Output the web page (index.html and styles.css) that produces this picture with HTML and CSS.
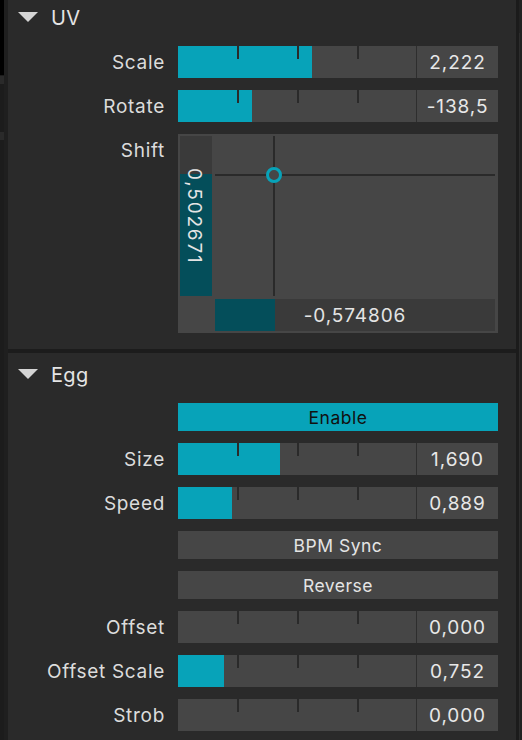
FILE: index.html
```html
<!DOCTYPE html>
<html>
<head>
<meta charset="utf-8">
<link rel="stylesheet" href="styles.css">
</head>
<body>
<div class="app">
  <div class="rail-left"><div class="rail-black"></div><div class="rail-dot"></div><div class="rail-dot second"></div></div>
  <div class="main">
    <section class="panel uv">
      <div class="panel-head"><span class="tri"></span><span class="title">UV</span></div>
      <div class="rows">
        <div class="row">
          <div class="label">Scale</div>
          <div class="slider">
            <div class="track"><div class="fill" style="width:134px"></div><span class="tick t1"></span><span class="tick t2"></span><span class="tick t3"></span></div>
            <div class="value">2,222</div>
          </div>
        </div>
        <div class="row">
          <div class="label">Rotate</div>
          <div class="slider">
            <div class="track"><div class="fill" style="width:74px"></div><span class="tick t1"></span><span class="tick t2"></span><span class="tick t3"></span></div>
            <div class="value">-138,5</div>
          </div>
        </div>
        <div class="row">
          <div class="label">Shift</div>
          <div class="xy">
            <div class="ybar" style="--fill:122px"><span class="ytext">0,502671</span></div>
            <div class="pad">
              <span class="hline" style="top:38px"></span>
              <span class="vline" style="left:58px"></span>
              <span class="dot" style="left:59px;top:39px"></span>
            </div>
            <div class="xbar" style="--fill:60px">-0,574806</div>
          </div>
        </div>
      </div>
    </section>
    <section class="panel egg">
      <div class="panel-head"><span class="tri"></span><span class="title">Egg</span></div>
      <div class="rows">
        <div class="row">
          <div class="spacer"></div>
          <div class="btn on">Enable</div>
        </div>
        <div class="row">
          <div class="label">Size</div>
          <div class="slider">
            <div class="track"><div class="fill" style="width:102px"></div><span class="tick t1"></span><span class="tick t2"></span><span class="tick t3"></span></div>
            <div class="value">1,690</div>
          </div>
        </div>
        <div class="row">
          <div class="label">Speed</div>
          <div class="slider">
            <div class="track"><div class="fill" style="width:54px"></div><span class="tick t1"></span><span class="tick t2"></span><span class="tick t3"></span></div>
            <div class="value">0,889</div>
          </div>
        </div>
        <div class="row">
          <div class="spacer"></div>
          <div class="btn">BPM Sync</div>
        </div>
        <div class="row">
          <div class="spacer"></div>
          <div class="btn">Reverse</div>
        </div>
        <div class="row">
          <div class="label">Offset</div>
          <div class="slider">
            <div class="track"><div class="fill" style="width:0px"></div><span class="tick t1"></span><span class="tick t2"></span><span class="tick t3"></span></div>
            <div class="value">0,000</div>
          </div>
        </div>
        <div class="row">
          <div class="label">Offset Scale</div>
          <div class="slider">
            <div class="track"><div class="fill" style="width:46px"></div><span class="tick t1"></span><span class="tick t2"></span><span class="tick t3"></span></div>
            <div class="value">0,752</div>
          </div>
        </div>
        <div class="row">
          <div class="label">Strob</div>
          <div class="slider">
            <div class="track"><div class="fill" style="width:0px"></div><span class="tick t1"></span><span class="tick t2"></span><span class="tick t3"></span></div>
            <div class="value">0,000</div>
          </div>
        </div>
      </div>
    </section>
  </div>
  <div class="rail-right"><div class="rr-a"></div><div class="rr-b"><div class="rr-line"></div></div></div>
</div>
</body>
</html>
```

FILE: styles.css
```css
html, body {
  margin: 0;
  padding: 0;
}
body {
  width: 522px;
  height: 740px;
  overflow: hidden;
  background: #1c1c1c;
  font-family: Inter, "Noto Sans", sans-serif;
  color: #dedede;
}
.app {
  display: flex;
  height: 740px;
}
.rail-left {
  width: 8px;
  flex: none;
  position: relative;
  background: linear-gradient(to right, #1c1c1c 4px, #1f1f1f 4px);
}
.rail-black {
  width: 4px;
  height: 75px;
  background: #000;
}
.rail-dot {
  position: absolute;
  left: 0;
  top: 76px;
  width: 4px;
  height: 8px;
  background: #2a2a2a;
}
.rail-dot.second {
  top: 132px;
}
.main {
  width: 508px;
  flex: none;
  display: flex;
  flex-direction: column;
  gap: 4px;
  margin-top: -4px;
}
.panel {
  background: #2a2a2a;
  padding-bottom: 16px;
}
.egg {
  flex: 1;
}
.panel-head {
  height: 42px;
  display: flex;
  align-items: center;
  padding-left: 10px;
  gap: 13px;
}
.tri {
  width: 0;
  height: 0;
  border-left: 10px solid transparent;
  border-right: 10px solid transparent;
  border-top: 10px solid #d4d4d4;
}
.title {
  font-size: 20px;
  line-height: 24px;
  padding-top: 2px;
  color: #e4e4e4;
  letter-spacing: 0.3px;
}
.rows {
  margin-top: 8px;
  display: flex;
  flex-direction: column;
  gap: 12px;
}
.row {
  display: flex;
  align-items: flex-start;
}
.spacer {
  width: 170px;
  flex: none;
}
.label {
  width: 157px;
  height: 32px;
  box-sizing: border-box;
  margin-right: 13px;
  flex: none;
  text-align: right;
  font-size: 19px;
  line-height: 31px;
  padding-top: 1px;
  letter-spacing: 0.7px;
  color: #dcdcdc;
  white-space: nowrap;
}
.slider {
  width: 320px;
  height: 32px;
  display: flex;
  gap: 1px;
  background: #2e2e2e;
}
.track {
  width: 238px;
  flex: none;
  background: #464646;
  position: relative;
  display: flex;
}
.fill {
  background: #07a3b9;
  height: 100%;
}
.tick {
  position: absolute;
  top: 0;
  width: 2px;
  height: 13px;
  background: #2a2a2a;
}
.t1 { left: 59px; }
.t2 { left: 119px; }
.t3 { left: 179px; }
.value {
  flex: 1;
  background: #464646;
  text-align: center;
  font-size: 19px;
  line-height: 31px;
  padding-top: 1px;
  box-sizing: border-box;
  letter-spacing: 0.9px;
  color: #e8e8e8;
}
.btn {
  width: 320px;
  height: 28px;
  box-sizing: border-box;
  padding-top: 1px;
  background: #464646;
  text-align: center;
  font-size: 17.5px;
  line-height: 27px;
  letter-spacing: 0.5px;
  color: #e4e4e4;
}
.btn.on {
  background: #07a3b9;
  color: #111;
}
.xy {
  width: 320px;
  height: 199px;
  box-sizing: border-box;
  background: #464646;
  padding: 2px;
  display: grid;
  grid-template-columns: 32px 280px;
  grid-template-rows: 160px 32px;
  column-gap: 3px;
  row-gap: 3px;
}
.ybar {
  grid-column: 1;
  grid-row: 1;
  position: relative;
  background: linear-gradient(to top, #044e5a var(--fill), #3a3a3a var(--fill));
}
.ytext {
  position: absolute;
  top: 32px;
  left: 2px;
  writing-mode: vertical-rl;
  font-size: 19px;
  letter-spacing: 1.8px;
  color: #e4e4e4;
  line-height: 24px;
}
.pad {
  grid-column: 2;
  grid-row: 1;
  position: relative;
}
.hline {
  position: absolute;
  left: 0;
  right: 0;
  height: 2px;
  background: #2a2a2a;
}
.vline {
  position: absolute;
  top: 0;
  bottom: 0;
  width: 2px;
  background: #2a2a2a;
}
.dot {
  position: absolute;
  width: 10px;
  height: 10px;
  margin: -8px 0 0 -8px;
  border: 3px solid #07a3b9;
  border-radius: 50%;
  background: #464646;
}
.xbar {
  grid-column: 2;
  grid-row: 2;
  box-sizing: border-box;
  background: linear-gradient(to right, #044e5a var(--fill), #3a3a3a var(--fill));
  text-align: center;
  font-size: 19px;
  line-height: 31px;
  padding-top: 1px;
  letter-spacing: 0.9px;
  color: #e4e4e4;
}
.rail-right {
  width: 6px;
  flex: none;
  display: flex;
}
.rr-a {
  width: 3px;
  background: #1b1b1b;
}
.rr-b {
  width: 3px;
  background: #222;
  padding-top: 33px;
}
.rr-line {
  width: 1px;
  height: 100%;
  background: #2c2c2c;
}
```
